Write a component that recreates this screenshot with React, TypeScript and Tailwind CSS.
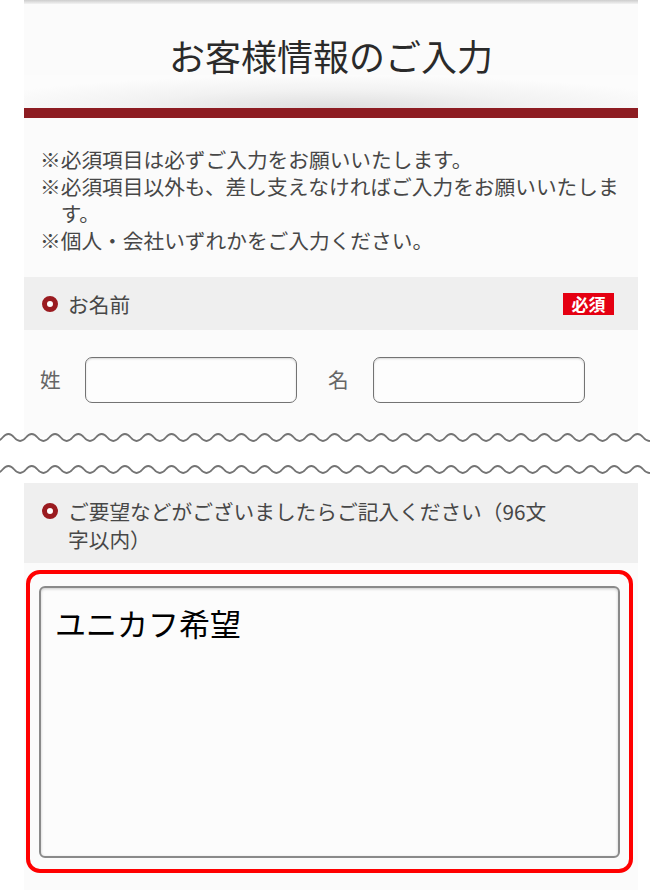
import React from "react";

function wavePath(y: number, a: number) {
  const period = 23.3;
  const h = period / 2;
  let x = -20.7;
  let d = `M ${x.toFixed(2)} ${y}`;
  d += ` Q ${(x + h / 2).toFixed(2)} ${y - 2 * a} ${(x + h).toFixed(2)} ${y}`;
  x += h;
  while (x < 680) {
    x += h;
    d += ` T ${x.toFixed(2)} ${y}`;
  }
  return d;
}

function Ring() {
  return (
    <span className="block w-[16px] h-[16px] rounded-full border-[5.5px] border-[#9a1b20] bg-white" />
  );
}

export default function App() {
  return (
    <div className="w-[650px] min-h-[890px] bg-white font-['Noto_Sans_CJK_JP','Noto_Sans',sans-serif] overflow-hidden">
      {/* Top container */}
      <div className="ml-[24px] w-[614px] bg-[#fbfbfb]">
        <div className="h-[4px] bg-[linear-gradient(to_bottom,#cdcdcd,#f3f3f3)]" />
        <div className="h-[71px] pt-[30px] text-center text-[36px] leading-[42px] text-[#2a2a2a]">
          お客様情報のご入力
        </div>
        <div className="h-[33px] bg-[radial-gradient(ellipse_60%_100%_at_50%_100%,#dedede_0%,#f2f2f2_55%,#fcfcfc_100%)]" />
        <div className="h-[10px] bg-[#8d1c22]" />
        <div className="pt-[28px] pb-[23px] pl-[16px] pr-[16px] text-[20.7px] leading-[27px] text-[#474747]">
          <p className="pl-[1em] indent-[-1em]">※必須項目は必ずご入力をお願いいたします。</p>
          <p className="pl-[1em] indent-[-1em]">※必須項目以外も、差し支えなければご入力をお願いいたします。</p>
          <p className="pl-[1em] indent-[-1em]">※個人・会社いずれかをご入力ください。</p>
        </div>
        {/* Header: name */}
        <div className="flex items-center bg-[#efefef] h-[53px] pl-[18px] pr-[24px]">
          <Ring />
          <div className="ml-[10px] flex-1 text-[20.7px] leading-[28px] text-[#474747]">お名前</div>
          <div className="ml-[5px] w-[51px] h-[22px] bg-[#e50012] flex items-center justify-center text-white text-[17px] font-bold leading-none">
            必須
          </div>
        </div>
        <div className="flex items-center pl-[16px] pt-[27px] pb-[20px] text-[20.7px] text-[#666]">
          <span className="w-[21px]">姓</span>
          <div className="ml-[24px] w-[212px] h-[46px] rounded-[7px] border-[1.5px] border-[#737373] bg-[#fdfdfd] shadow-[inset_0_1px_2px_rgba(0,0,0,0.15)]" />
          <span className="ml-[31px] w-[21px]">名</span>
          <div className="ml-[24px] w-[212px] h-[46px] rounded-[7px] border-[1.5px] border-[#737373] bg-[#fdfdfd] shadow-[inset_0_1px_2px_rgba(0,0,0,0.15)]" />
        </div>
      </div>

      {/* Wave cut */}
      <svg width="650" height="60" viewBox="0 0 650 60" className="block">
        <rect x="24" y="0" width="614" height="14.5" fill="#fbfbfb" />
        <path d={wavePath(14.5, 3.5)} fill="none" stroke="#747474" strokeWidth="1.8" />
        <path d={wavePath(46.5, 3.5)} fill="none" stroke="#747474" strokeWidth="1.8" />
      </svg>

      {/* Bottom container */}
      <div className="ml-[24px] w-[614px] bg-[#fbfbfb] pb-[17px]">
        <div className="flex items-start bg-[#efefef] pl-[18px] pr-[24px] pt-[14px] pb-[10px]">
          <div className="h-[28px] flex items-center">
            <Ring />
          </div>
          <div className="ml-[10px] flex-1 text-[20.7px] leading-[28px] text-[#474747]">
            ご要望などがございましたらご記入ください（96文字以内）
          </div>
          <div className="ml-[5px] w-[51px]" />
        </div>
        <div className="ml-[2px] mt-[7px] w-[607px] rounded-[14px] border-[4px] border-[#ff0000] pt-[12px] pb-[11px] pl-[9px] pr-[9px]">
          <div className="h-[272px] rounded-[6px] border-[2px] border-[#8a8a8a] bg-[#fcfcfc] shadow-[inset_0_1px_3px_rgba(0,0,0,0.2)] pl-[14px] pt-[15px] text-[31px] leading-[40px] text-black">
            ユニカフ希望
          </div>
        </div>
      </div>
    </div>
  );
}
